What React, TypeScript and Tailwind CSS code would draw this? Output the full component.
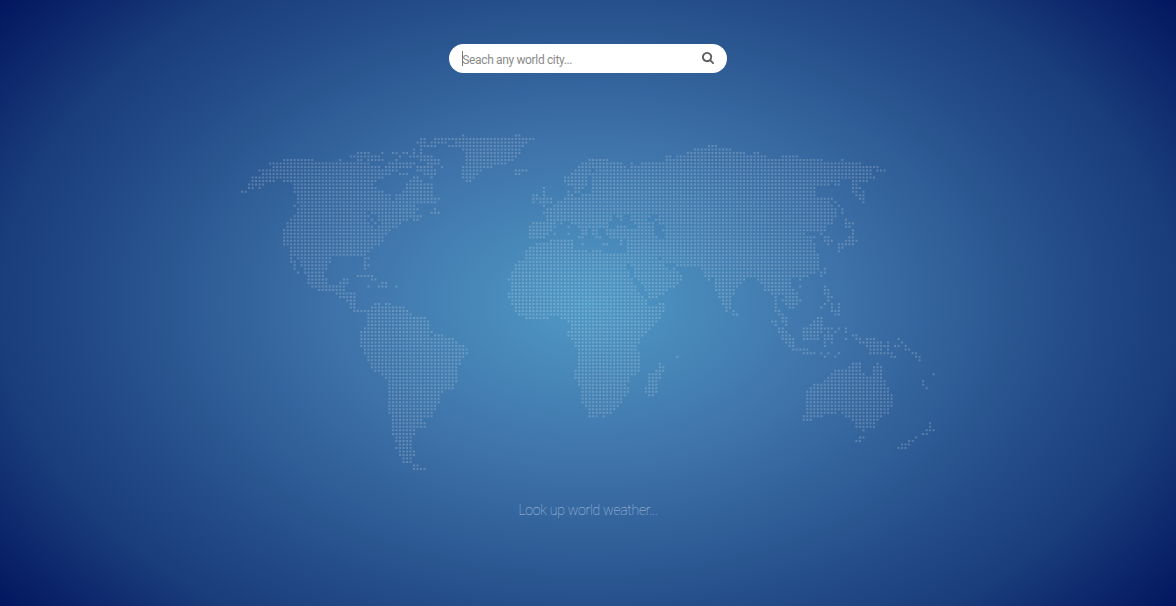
import React from "react";

// Land outline as spans, grouped by region. Every line is "y: x1-x2 x ...",
// in thirds of a pixel from the region's origin; spans snap to the dot grid.
type Region = { x: number; y: number; spans: string };

const PITCH = 3.511;
const LEFT = 242;
const TOP = 135.45;

const regions: Region[] = [
  {
    x: 236, y: 128, spans: `
64: 535
75: 366-398 440 471-482 503-514 535
86: 345-430 492 524-535
96: 145-230 314 366-377 398-440 482
107: 103-398 461-514
117: 114-430 450-524
128: 72-100 110-482
138: 82-461 492-514
149: 50-440
159: 50-114 145-419 524-535
170: 40-82 177-408 513-535
180: 40-50 72 177-419 513-535
191: 18-29 177-440 503-535
201: 187-461 482-535
212: 187-461 482-535
222: 187-535
233: 177 198-535
243: 187-535
254: 187-387 408-430 440-535
265: 177-377 387-398 430-535
275: 166-387 408 430-514 535
286: 156-398 419 440-492
296: 156-408 430-482
307: 145-408 419-461
317: 145-450
328: 145-440
338: 145-440
349: 145-430
359: 166-408
370: 166-398
380: 166-387`,
  },
  {
    x: 410, y: 128, spans: `
22: 160 318-329
33: 34-45 76-108 118-371
43: 24-45 66-108 139-350
54: 34-76 118-340
64: 13 34 160-329
75: 13 34 170-329
86: 3-66 170-318
96: 34-87 170-308
107: 3-13 55-87 170-287
117: 24-66 97 160-245
128: 24-76 160-213 318-350
138: 45-76 160-203 318-329
149: 13-24 66 160-192
159: 3-34 170-182
170: 3-45 55-66
180: 3-66
191: 3-66
201: 3-66
212: 3-87
222: 3-76
233: 3-13
243: 13-24 76
254: 3-13 66-87
265: 3-34
275: 13-24
107: 518-535
117: 508-535
128: 497-535
138: 487-535
149: 466-530
159: 466-530
170: 476-530
180: 403 497-518
191: 403 476 497-508
201: 371-382 403 476-487 518-535
212: 371-382 392-424 466-480 490-535
222: 371 392-424 445-535
233: 403 434-535
243: 413-535
254: 403-535
265: 413-535
275: 413-535
286: 371-434 455 487-508 530
296: 361-434 476 508-535
307: 361-424 518-530
317: 361-413 434 476 518-530
328: 361-403 508-518
338: 424-487
349: 382-487 518
359: 361-487
370: 350-487 518-530
380: 350-535`,
  },
  {
    x: 580, y: 128, spans: `
54: 387-408
64: 345-450
75: 324-492 524-535
86: 261-271 292-535
96: 29-82 261-535
107: 8-124 155 187-535
117: 8-135 155-535
128: 8-29 50-535
138: 8-29 40-535
149: 8 40-535
159: 8-18 40-535
170: 8-18 40-535
180: 8 40-535
191: 40-535
201: 8-535
212: 8-535
222: 8-535
233: 8-535
243: 8-535
254: 8-535
265: 8-92 113-124 155-208 240-535
275: 8-92 124 155-198 229-535
286: 8-82 166-198 208-219 240-535
296: 8 29-82 113-134 176-219 261-535
307: 18 40-50 82-219 250-535
317: 18 40-50 82-219 261-535
328: 50-60 92-219 229 261-535
338: 124 145-250 261-535
349: 8 71-82 124 145-535
359: 145-535
370: 40-61 145-535
380: 8-124 145-535`,
  },
  {
    x: 750, y: 128, spans: `
75: 14-24
86: 3-45 98-140
96: 3-213 277
107: 3-330
117: 3-382
128: 3-361 382-404
138: 3-361
149: 3-371
159: 3-245 256-266 308-350
170: 3-235 256-266 308-319
180: 3-192 308-330
191: 3-192 308-319 340
201: 3-192 319-340
212: 3-245 329-340
222: 3-235 256 340
233: 3-245 266
243: 3-256 277
254: 3-256 277
265: 3-256
275: 3-245 287
286: 3-245 287 298-308
296: 3-224 287-298
307: 3-224 308
317: 3-161 214 308
328: 3-192 224-235 298-308
338: 3-182 224-245 287-319
349: 3-192 235 266-308
359: 3-192 266-277
370: 3-192 266
380: 3-203`,
  },
  {
    x: 270, y: 250, spans: `
4: 65-298
15: 65 85-277 287
25: 65 85-182 287-298
36: 65-75 96-182 287
46: 75 96-172 287-298
57: 75 106-172 287
67: 85 106-161
78: 117-161 266-308
88: 117-172 224-235 308-319
99: 117-172 213-235 340-350
109: 127-224 298 329-350 382
120: 148-224
130: 203-256
141: 213-256
151: 234-256
162: 245-256 319-329 350-361
173: 245-256 308-403
183: 256-414
193: 298-424
204: 298-466
215: 298-477
225: 298-477
236: 287-477
246: 277-487
257: 277-477 498-519
267: 277-550
278: 277-561
288: 277-582
299: 287-592
309: 287-592`,
  },
  {
    x: 340, y: 350, spans: `
9: 77-382
20: 87-371
31: 87-361
41: 98-361
52: 98-350
62: 108-350
73: 129-350
83: 140-350
94: 150-350
104: 150-340
115: 150-340
125: 150-308
136: 150-298
146: 150-298
157: 150-298
167: 150-287
178: 150-287
188: 150-277
199: 161-277
209: 161-245
220: 161-256
230: 161-256
241: 161-224
251: 161-224
262: 171-213
272: 171-213
283: 182-213
294: 171-213
304: 182-224
315: 182-224
325: 192-213
336: 192-213
346: 224-235
357: 224-256`,
  },
  {
    x: 500, y: 240, spans: `
2: 155-219 363 384-563
13: 113-219 250 311-321 363 384-563
23: 92-219 384-563
34: 82-250 280-301 384-563
44: 82-563
55: 82-374 384-474 495-563
66: 61-374 384-484 495-563
76: 50-374 395-495 532-563
87: 50-374 405-505 521
97: 40-384 405-532
108: 40-384 405-542
118: 27-395 416-540
129: 40-395 426-532
139: 40-405 437-521
150: 40-405 437-500
160: 27-416 447-490
171: 27-426 447-470
181: 40-437
192: 40-437 479-490
202: 50-490
213: 50-490
223: 61-484
234: 82-145 182-479
244: 208-468
255: 218-458
265: 218-447
276: 208-437
287: 208-426
297: 218-416
308: 229-416
318: 229-405
329: 240-405
339: 240-416
350: 240-416 532
360: 240-416
371: 240-416 479
381: 240-416 479-490
392: 229-416 468-490
402: 229-405 447-479
413: 229-384 447-479
423: 240-384 447-468
434: 240-374 447-468
444: 250-384 437-468
455: 250-384 437-468
466: 250-374 447-458
476: 250-363
487: 250-363
497: 261-353
508: 271-342
518: 271-332
529: 271-290 311`,
  },
  {
    x: 690, y: 250, spans: `
4: 3-373 447
15: 3-384
25: 3-384
36: 3-384
46: 3-384
57: 35-384 405
67: 46-373 395-405
78: 46-352 395
88: 56 77-161 203-300 331
99: 77-150 214-300
109: 77-140 224-300 331 405
120: 77-130 224-310 405-415
130: 88-130 245-320 405-415
141: 88-119 256 288-320 415-426
151: 98-119 256 277-331 415
162: 98-119 256 288-320 405 426 447
173: 109-119 256 298-310 395 426 447
183: 109 130 256-267 426-447
193: 130-140 267-277 436-447
204: 277-288 384-395
215: 245-256 277-288 373-395
225: 256 288 363-395
236: 267-277 342-395 405-426 447 468
246: 267-288 342-395 415 436 468
257: 277-298 342-384 405-426 489-499
267: 277-310 342-384 405-426 468 499-510 531-552 626
278: 288-310 405 426 510-573 594 636
288: 298-310 405 531-594 615-626 647
299: 310-352 541-573 594 647-657
309: 342-373 394 415 447 541-605 668-679
320: 405 436 605-615 679-689`,
  },
  {
    x: 790, y: 340, spans: `
60: 389
71: 189-210 262
81: 178-210 252-273
92: 136-210 252-273
102: 126-220 252-273 431
113: 115-273
123: 105-283 399
134: 73-283 399
144: 63-294 410
155: 52-294
165: 52-304
176: 52-304
186: 52-304
197: 52-304
207: 52-294
218: 52-136 157-294
229: 42-94 168-273
239: 42-63 189-262
250: 199-252 420
260: 199-252 420
271: 220 410-431
281: 399-410
292: 210-220 378
303: 199-210 357-368
313: 336-357
324: 325-347`,
  },
];

function buildDots(): [number, number][] {
  const seen = new Set<string>();
  const dots: [number, number][] = [];
  for (const region of regions) {
    for (const line of region.spans.trim().split("\n")) {
      const [y, rest] = line.split(":");
      const row = Math.round((region.y + Number(y) / 3 - TOP) / PITCH);
      for (const span of rest.trim().split(" ")) {
        const ends = span.split("-").map((v) => Math.round((region.x + Number(v) / 3 - LEFT) / PITCH));
        const last = ends[ends.length - 1];
        for (let col = ends[0]; col <= last; col++) {
          const key = `${col},${row}`;
          if (!seen.has(key)) {
            seen.add(key);
            dots.push([col, row]);
          }
        }
      }
    }
  }
  return dots;
}

const mapPath = buildDots()
  .map(([c, r]) => `M${(c * PITCH + 1).toFixed(2)} ${(r * PITCH + 1.45).toFixed(2)}h2v2h-2z`)
  .join("");

function WorldMap() {
  return (
    <svg className="block h-[338px] w-[696px] fill-white/20" viewBox="0 0 696 338" aria-hidden="true">
      <path d={mapPath} />
    </svg>
  );
}

function SearchIcon() {
  return (
    <svg className="h-3 w-3 fill-[#5c5c5c]" viewBox="0 0 1664 1664" aria-hidden="true">
      <path d="M1152 704q0-185-131.500-316.500T704 256 387.500 387.500 256 704t131.500 316.500T704 1152t316.500-131.500T1152 704zm512 832q0 52-38 90t-90 38q-54 0-90-38l-343-342q-179 124-399 124-143 0-273.500-55.500t-225-150-150-225T0 704t55.500-273.500 150-225 225-150T704 0t273.500 55.500 225 150 150 225T1408 704q0 220-124 399l343 343q37 37 37 90z" />
    </svg>
  );
}

export default function App() {
  return (
    <main className="flex h-[606px] w-full flex-col items-center overflow-hidden bg-[radial-gradient(700px_455px_at_50%_50%,#5099c6_0%,#3d70a7_38%,#254f8a_67%,#1a3d7b_84%,#02165f_107%)] pt-11 font-[Roboto,sans-serif]">
      <form className="flex h-[28.5px] w-[277.5px] items-center justify-between rounded-full bg-white pr-[13px] pl-[13px]" onSubmit={(e) => e.preventDefault()}>
        <div className="flex items-center">
          <span className="-mr-px h-[15px] w-px bg-[#777]" />
          <input
            aria-label="City"
            placeholder="Seach any world city..."
            className="w-[200px] pt-1 text-[12px] leading-4 tracking-[-0.35px] text-gray-700 outline-none placeholder:text-[#8a8a8a]"
          />
        </div>
        <button aria-label="Search">
          <SearchIcon />
        </button>
      </form>
      <div className="mt-[60.5px]">
        <WorldMap />
      </div>
      <p className="mt-[29px] text-[14px] leading-5 font-thin tracking-[-0.25px] text-[#a9c2df]">Look up world weather...</p>
    </main>
  );
}
